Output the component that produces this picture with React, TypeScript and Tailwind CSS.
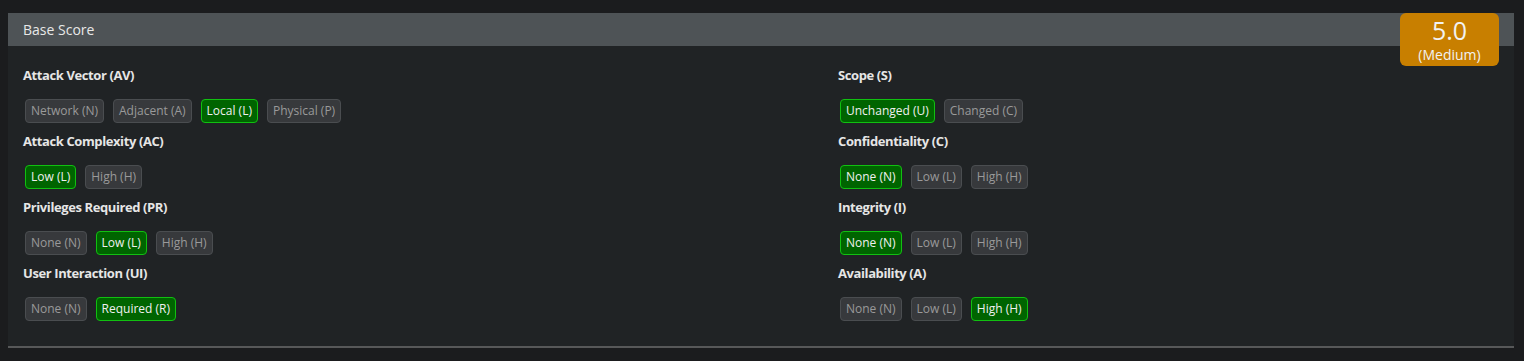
import React from "react";

type Metric = { label: string; options: string[]; selected: number };

const left: Metric[] = [
  { label: "Attack Vector (AV)", options: ["Network (N)", "Adjacent (A)", "Local (L)", "Physical (P)"], selected: 2 },
  { label: "Attack Complexity (AC)", options: ["Low (L)", "High (H)"], selected: 0 },
  { label: "Privileges Required (PR)", options: ["None (N)", "Low (L)", "High (H)"], selected: 1 },
  { label: "User Interaction (UI)", options: ["None (N)", "Required (R)"], selected: 1 },
];

const right: Metric[] = [
  { label: "Scope (S)", options: ["Unchanged (U)", "Changed (C)"], selected: 0 },
  { label: "Confidentiality (C)", options: ["None (N)", "Low (L)", "High (H)"], selected: 0 },
  { label: "Integrity (I)", options: ["None (N)", "Low (L)", "High (H)"], selected: 0 },
  { label: "Availability (A)", options: ["None (N)", "Low (L)", "High (H)"], selected: 2 },
];

function Group({ m }: { m: Metric }) {
  return (
    <div className="flex flex-col">
      <div className="h-[20px] leading-[20px] text-[13px] font-bold text-[#e6e6e6] tracking-[-0.4px]">{m.label}</div>
      <div className="mt-[14px] mb-[8px] flex gap-[9px] pl-[2px]">
        {m.options.map((o, i) =>
          i === m.selected ? (
            <div
              key={o}
              className="h-[24px] px-[5px] flex items-center rounded-[4px] border border-[#11c011] bg-[#006400] text-[12px] text-[#f0f0f0]"
            >
              {o}
            </div>
          ) : (
            <div
              key={o}
              className="h-[24px] px-[5px] flex items-center rounded-[4px] border border-[#4a4d50] bg-[#37393c] text-[12px] text-[#9a9a9a]"
            >
              {o}
            </div>
          )
        )}
      </div>
    </div>
  );
}

export default function App() {
  return (
    <div
      className="w-[1524px] h-[361px] bg-[#1b1c1e] pt-[13px] pl-[8px] pr-[10px]"
      style={{ fontFamily: '"Open Sans", "Noto Sans", sans-serif' }}
    >
      <div className="relative bg-[#202325] border-b-2 border-[#575859]">
        <div className="h-[33px] bg-[#4e5356] flex items-center pl-[15px] text-[14px] text-[#e8e8e8]">Base Score</div>
        <div className="grid grid-cols-[815px_1fr] pl-[15px] pt-[19px] pb-[17px]">
          <div className="flex flex-col">
            {left.map((m) => (
              <Group key={m.label} m={m} />
            ))}
          </div>
          <div className="flex flex-col">
            {right.map((m) => (
              <Group key={m.label} m={m} />
            ))}
          </div>
        </div>
        <div className="absolute top-0 right-[15px] w-[99px] h-[53px] rounded-[6px] bg-[#c87f00] flex flex-col items-center justify-center text-[#f2f2f2]">
          <div className="text-[25px] leading-[30px]">5.0</div>
          <div className="text-[14px] leading-[19px]">(Medium)</div>
        </div>
      </div>
    </div>
  );
}
